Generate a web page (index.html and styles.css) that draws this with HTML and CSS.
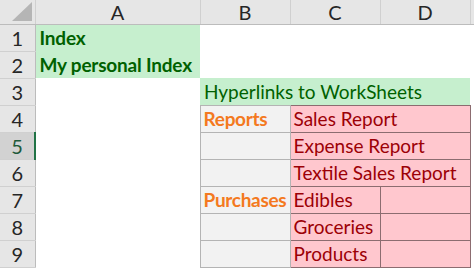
FILE: index.html
```html
<!DOCTYPE html>
<html lang="en">
<head>
    <meta charset="UTF-8">
    <meta name="viewport" content="width=device-width, initial-scale=1.0">
    <title>Index</title>
    <link rel="stylesheet" href="styles.css">
</head>
<body>
    <table class="sheet">
        <colgroup>
            <col class="col-head">
            <col class="col-a">
            <col class="col-b">
            <col class="col-c">
            <col class="col-d">
            <col class="col-rest">
        </colgroup>
        <tr class="head-row">
            <th class="corner"><span class="corner-mark"></span></th>
            <th>A</th>
            <th>B</th>
            <th>C</th>
            <th>D</th>
            <th class="rest"></th>
        </tr>
        <tr>
            <th class="row-num">1</th>
            <td class="good bold">Index</td>
            <td></td><td></td><td></td><td></td>
        </tr>
        <tr>
            <th class="row-num">2</th>
            <td class="good bold">My personal Index</td>
            <td></td><td></td><td></td><td></td>
        </tr>
        <tr>
            <th class="row-num">3</th>
            <td></td>
            <td class="good" colspan="3">Hyperlinks to WorkSheets</td>
            <td></td>
        </tr>
        <tr>
            <th class="row-num">4</th>
            <td></td>
            <td class="group">Reports</td>
            <td class="bad" colspan="2">Sales Report</td>
            <td></td>
        </tr>
        <tr>
            <th class="row-num active">5</th>
            <td></td>
            <td class="group"></td>
            <td class="bad" colspan="2">Expense Report</td>
            <td></td>
        </tr>
        <tr>
            <th class="row-num">6</th>
            <td></td>
            <td class="group"></td>
            <td class="bad" colspan="2">Textile Sales Report</td>
            <td></td>
        </tr>
        <tr>
            <th class="row-num">7</th>
            <td></td>
            <td class="group">Purchases</td>
            <td class="bad">Edibles</td>
            <td class="bad"></td>
            <td></td>
        </tr>
        <tr>
            <th class="row-num">8</th>
            <td></td>
            <td class="group"></td>
            <td class="bad">Groceries</td>
            <td class="bad"></td>
            <td></td>
        </tr>
        <tr>
            <th class="row-num">9</th>
            <td></td>
            <td class="group"></td>
            <td class="bad">Products</td>
            <td class="bad"></td>
            <td></td>
        </tr>
    </table>
</body>
</html>
```

FILE: styles.css
```css
body {
    margin: 0;
    background-color: #fff;
    font-family: Lato, "Open Sans", sans-serif;
    overflow: hidden;
}

.sheet {
    border-collapse: collapse;
    table-layout: fixed;
    width: 480px;
    font-size: 19px;
}

.col-head { width: 35px; }
.col-a { width: 165px; }
.col-b { width: 90px; }
.col-c { width: 90px; }
.col-d { width: 90px; }
.col-rest { width: 10px; }

tr {
    height: 27px;
}

td {
    padding: 0 1px 2px 3px;
    vertical-align: bottom;
    white-space: nowrap;
    line-height: 23px;
}

/* column letters */
.head-row {
    height: 24px;
}
.head-row th {
    background-color: #e6e6e6;
    color: #262626;
    font-size: 20px;
    font-weight: normal;
    border-right: 1px solid #d0d0d0;
    border-bottom: 1px solid #bcbcbc;
    padding: 0;
    line-height: 22px;
}
.head-row .rest {
    border-right: none;
}

.corner {
    position: relative;
}
.corner-mark {
    position: absolute;
    right: 3px;
    bottom: 3px;
    width: 0;
    height: 0;
    border-left: 20px solid transparent;
    border-bottom: 19px solid #b5b5b5;
}

/* row numbers */
.row-num {
    background-color: #e6e6e6;
    color: #262626;
    font-size: 20px;
    font-weight: normal;
    border-right: 1px solid #bcbcbc;
    border-bottom: 1px solid #d0d0d0;
    padding: 0;
    vertical-align: middle;
}
.row-num.active {
    background-color: #d2d2d2;
    color: #1e5a3a;
    border-right: 2px solid #217346;
}

.bold {
    font-weight: bold;
    letter-spacing: -0.2px;
}

.good {
    background-color: #c6efce;
    color: #006100;
    padding-left: 4px;
}

.bad {
    background-color: #ffc7ce;
    color: #9c0006;
    border: 1px solid #8c6c70;
}

.group {
    background-color: #f2f2f2;
    color: #f47920;
    font-weight: bold;
    letter-spacing: -0.3px;
    border: 1px solid #b4b4b4;
}
```
